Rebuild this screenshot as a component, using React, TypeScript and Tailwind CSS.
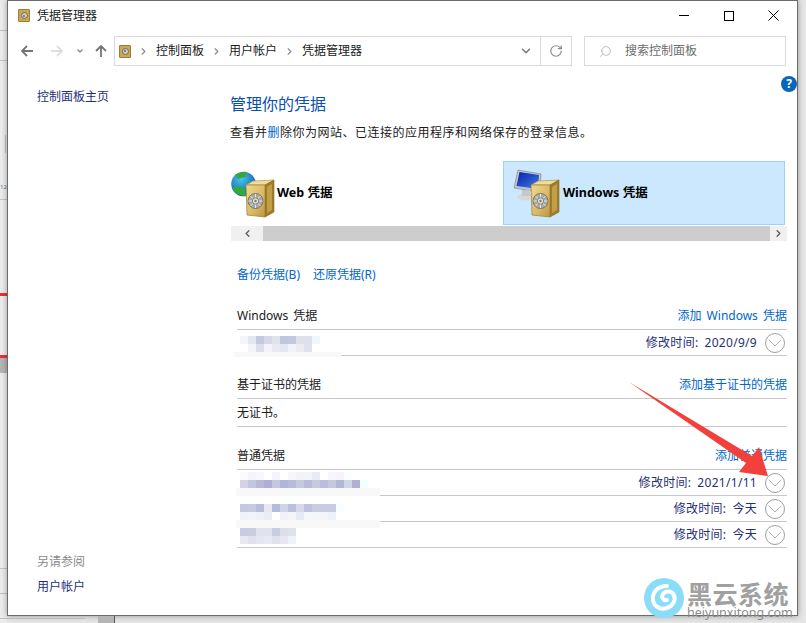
import { ChevronDown, ChevronLeft, ChevronRight, RotateCw, Search } from 'lucide-react';

// 打码区块的颜色，每行一组
const ROW_1 = [
  ['#f4f5fa', '#e4e6f1', '#c5c8e0', '#d6d8e8', '#e0e2ee', '#c2c5de', '#c4c7df', '#dfe0ec', '#dfe0ec', '#f0f7fc'],
  ['#ffffff', '#f3f4f9', '#dcdeec', '#f2f4f9', '#e8e9f2', '#e4e6f0', '#f2f3f9', '#ebecf3', '#dfe1ee', '#ffffff'],
];
const ROW_2 = [
  ['#fbfbfe', '#f4f5fb', '#f8f8fc', '#ffffff', '#f4f4fa', '#ffffff', '#f7f7fb', '#f2f3f9', '#f3f4f9', '#e8ebf4', '#ffffff', '#f7f7fb', '#f7f3fa', '#fbfdff'],
  ['#d3d3e5', '#c3c6e0', '#b6b9d8', '#adafd6', '#c3c8e0', '#b0b6d8', '#b7bcd9', '#c6cae0', '#b8bbda', '#c7c9df', '#babddb', '#c5c9e0', '#b2b7d8', '#cdd7e6', '#aeb0d6', '#f2ffff'],
];
const ROW_3 = [
  ['#c5c9e0', '#c9cae0', '#b9bcda', '#e9e8f2', '#b1bddc', '#cfd4e6', '#bcc0dc', '#d7d9e9', '#bfc1de', '#cacde2', '#c9cce1', '#c8cbe1', '#fafdff'],
  ['#f1f2f8', '#f3f4f9', '#f0f1f7', '#ebecf4', '#ffffff', '#f1f2f7', '#f4f4f9', '#e8eaf3', '#f6f7fb', '#f5f6fa', '#f4f4f9', '#eff1f8', '#ffffff'],
];
const ROW_4 = [
  ['#c9cbe2', '#cacce2', '#e0e2ee', '#e0e3ee', '#cacde2', '#dcdeeb', '#dde3ee'],
  ['#e8e8f2', '#dfe1ee', '#e4e6f1', '#e8e9f2', '#dfe1ec', '#e6e7f1', '#eef2fa'],
];

function Blur({ rows, band }: { rows: string[][]; band?: { left: number; width: number; height: number } }) {
  return (
    <div className="relative flex flex-col">
      {rows.map((r, i) => (
        <div key={i} className="flex">
          {r.map((c, j) => (
            <span key={j} className="block h-[8px] w-[8px]" style={{ background: c }} />
          ))}
        </div>
      ))}
      {band && (
        <span className="absolute top-full bg-[#f8f8f8]" style={{ left: band.left, width: band.width, height: band.height }} />
      )}
    </div>
  );
}

function VaultBody({ x = 0 }: { x?: number }) {
  return (
    <g transform={`translate(${x} 0)`}>
      <defs>
        <linearGradient id="vaultFront" x1="0" y1="0" x2="1" y2="1">
          <stop offset="0" stopColor="#efd98f" />
          <stop offset="0.6" stopColor="#d8b862" />
          <stop offset="1" stopColor="#bb9642" />
        </linearGradient>
      </defs>
      <path d="M15 17 L22 13 L43 12 L35 17 Z" fill="#efdd9c" stroke="#a98a3a" strokeWidth="0.6" />
      <path d="M34 17 L43 12 L43 44 L34 49 Z" fill="#a07c2a" stroke="#85671f" strokeWidth="0.6" />
      <path d="M36 19 L41 16 L41 42 L36 45 Z" fill="#c39e48" />
      <path d="M15 17 L34 17 L34 49 L16 47 Z" fill="url(#vaultFront)" stroke="#9c7d30" strokeWidth="0.7" />
      <circle cx="24.5" cy="33" r="7.5" fill="#a9a9a3" stroke="#6f6f67" strokeWidth="0.9" />
      <path d="M24.5 26 V40 M17.5 33 H31.5 M19.5 28 L29.5 38 M29.5 28 L19.5 38" stroke="#e6e6df" strokeWidth="1" />
      <circle cx="24.5" cy="33" r="3.2" fill="#dfdfd6" stroke="#6f6f67" strokeWidth="0.8" />
      <circle cx="24.5" cy="33" r="1.2" fill="#7d7d75" />
    </g>
  );
}

function WebVault() {
  return (
    <svg width="46" height="50" viewBox="0 0 46 50" className="shrink-0">
      <defs>
        <radialGradient id="globe" cx="0.4" cy="0.3" r="0.8">
          <stop offset="0" stopColor="#46c4f2" />
          <stop offset="1" stopColor="#0c4f9c" />
        </radialGradient>
      </defs>
      <circle cx="12.5" cy="16" r="12.3" fill="url(#globe)" />
      <path d="M4 7 Q10 3 16 4 L14 9 L7 11 Z M1 20 Q8 16 14 21 L15 28 Q5 28 1 20 Z" fill="#35a83c" />
      <VaultBody />
    </svg>
  );
}

function WinVault() {
  return (
    <svg width="47" height="50" viewBox="0 0 47 50" className="shrink-0">
      <defs>
        <linearGradient id="screen" x1="0" y1="0" x2="1" y2="1">
          <stop offset="0" stopColor="#0a1fa8" />
          <stop offset="1" stopColor="#3f7fe8" />
        </linearGradient>
      </defs>
      <path d="M5 2 L28 6 L27 24 L1 20 Z" fill="#c2c6cc" stroke="#8d9299" strokeWidth="0.8" />
      <path d="M6.5 4 L26 7 L25 21 L3.5 18 Z" fill="url(#screen)" />
      <ellipse cx="13" cy="29" rx="9" ry="3.5" fill="#d6d8da" />
      <rect x="9" y="22" width="8" height="6" fill="#c6c8cb" />
      <VaultBody x={3} />
    </svg>
  );
}

function TitleVault() {
  return (
    <span className="flex h-[13px] w-[12px] shrink-0 items-center justify-center rounded-[1px] border border-[#9c7f34] bg-[#c9a855]">
      <span className="flex h-[7px] w-[7px] items-center justify-center rounded-full border border-[#6f6a5a] bg-[#cfcfc6]">
        <span className="h-[2px] w-[2px] rounded-full bg-[#6f6a5a]" />
      </span>
    </span>
  );
}

function NavArrow({ className }: { className: string }) {
  return (
    <svg width="12" height="12" viewBox="0 0 12 12" fill="none" stroke="currentColor" strokeWidth="1.8" className={className}>
      <path d="M6 1 L1 6 L6 11 M1 6 H12" />
    </svg>
  );
}

function Expand() {
  return (
    <span className="ml-[8px] flex h-[20px] w-[20px] items-center justify-center rounded-full border border-[#a0a0a0]">
      <ChevronDown size={24} strokeWidth={0.7} className="shrink-0 text-[#8c8c8c]" />
    </span>
  );
}

function SectionHead({ title, action }: { title: string; action: string }) {
  return (
    <div className="flex h-[25px] justify-between border-b border-[#c8c8c8] pt-px text-[12px] leading-[20px] [word-spacing:2px]">
      <span className="text-[#1a1a1a]">{title}</span>
      <a className="text-[#0066cc]">{action}</a>
    </div>
  );
}

function CredRow({ rows, time, pad, band }: { rows: string[][]; time: string; pad: string; band?: { left: number; width: number; height: number } }) {
  return (
    <div className="flex h-[26px] justify-between border-b border-[#c8c8c8]">
      <div className={`ml-[3px] ${pad}`}>
        <Blur rows={rows} band={band} />
      </div>
      <div className="flex items-center text-[12px] tracking-[0.3px] text-[#1f2f75]">
        <span>修改时间:</span>
        <span className="ml-[6px]">{time}</span>
        <Expand />
        <span className="w-[2px]" />
      </div>
    </div>
  );
}

export default function App() {
  return (
    <div className="relative flex h-[623px] w-[806px] overflow-hidden bg-[#e6e6e6] font-['Noto_Sans','Noto_Sans_CJK_SC',sans-serif]">
      {/* 窗口背后露出的左侧内容 */}
      <div className="flex h-full w-[7px] shrink-0 flex-col overflow-hidden bg-[#ececec]">
        <div className="mt-[30px] h-px bg-[#c4c4c4]" />
        <div className="mt-[29px] h-px bg-[#c4c4c4]" />
        <div className="ml-[5px] mt-[74px] h-[18px] w-px bg-[#bdbdbd]" />
        <div className="mt-[29px] h-[10px] whitespace-nowrap text-[6px] leading-[10px] text-[#5c7f9c]">12</div>
        <div className="mt-[7px] h-px bg-[#c4c4c4]" />
        <div className="mt-[93px] h-[3px] bg-[#ee2f35]" />
        <div className="mt-[59px] h-[3px] bg-[#ee2f35]" />
        <div className="h-[15px] bg-[#b5b5b5]" />
        <div className="mt-[195px] h-px bg-[#c4c4c4]" />
        <div className="mt-[24px] h-px bg-[#c4c4c4]" />
      </div>

      <div className="flex h-[616px] w-[791px] shrink-0 flex-col border border-[#6b6b6b] bg-white shadow-[0_0_6px_rgba(0,0,0,0.35)]">
        {/* 标题栏 */}
        <div className="flex h-[29px] shrink-0 items-center pl-[10px]">
          <TitleVault />
          <span className="ml-[7px] text-[12px] text-[#1a1a1a]">凭据管理器</span>
          <div className="ml-auto flex items-center text-black">
            <span className="flex w-[45px] justify-center"><span className="h-px w-[10px] bg-black" /></span>
            <span className="flex w-[45px] justify-center"><span className="h-[10px] w-[10px] border border-black" /></span>
            <span className="flex w-[45px] justify-center">
              <svg width="11" height="11" viewBox="0 0 11 11" stroke="currentColor" strokeWidth="1"><path d="M0.5 0.5 L10.5 10.5 M10.5 0.5 L0.5 10.5" /></svg>
            </span>
            <span className="w-px" />
          </div>
        </div>

        {/* 地址栏 */}
        <div className="mt-[6px] flex h-[30px] shrink-0 items-center">
          <div className="flex w-[105px] items-center pl-[13px]">
            <NavArrow className="text-[#757575]" />
            <NavArrow className="ml-[18px] rotate-180 text-[#dedede]" />
            <svg width="6" height="4" viewBox="0 0 6 4" fill="none" stroke="#8a8a8a" strokeWidth="1.3" className="ml-[14px]"><path d="M0.5 0.5 L3 3 L5.5 0.5" /></svg>
            <NavArrow className="ml-[12px] rotate-90 text-[#757575]" />
          </div>
          <div className="ml-px flex h-[30px] w-[458px] items-center border border-[#d9d9d9] pl-[4px] text-[12px] text-[#1a1a1a]">
            <TitleVault />
            <ChevronRight size={11} strokeWidth={2.5} className="ml-[7px] text-[#8a8a8a]" />
            <span className="ml-[7px]">控制面板</span>
            <ChevronRight size={11} strokeWidth={2.5} className="ml-[7px] text-[#8a8a8a]" />
            <span className="ml-[7px]">用户帐户</span>
            <ChevronRight size={11} strokeWidth={2.5} className="ml-[7px] text-[#8a8a8a]" />
            <span className="ml-[7px]">凭据管理器</span>
            <ChevronDown size={14} strokeWidth={2.2} className="ml-auto mr-[7px] text-[#6f6f6f]" />
            <span className="flex h-full w-[31px] items-center justify-center border-l border-[#d9d9d9]">
              <RotateCw size={14} strokeWidth={2} className="text-[#8a8a8a]" />
            </span>
          </div>
          <div className="ml-[12px] flex h-[30px] w-[202px] items-center border border-[#d9d9d9] pl-[14px] text-[12px] text-[#6d6d6d]">
            <Search size={13} strokeWidth={1} className="-scale-x-100 text-[#8a8a8a]" />
            <span className="ml-[13px]">搜索控制面板</span>
          </div>
        </div>

        {/* 主体 */}
        <div className="relative flex min-h-0 flex-1">
          <span className="absolute right-0 top-[10px] flex h-[16px] w-[16px] items-center justify-center rounded-full bg-[#0a66b8] text-[12px] font-bold text-white">?</span>

          <aside className="flex w-[223px] shrink-0 flex-col pb-[18px] pl-[29px] pt-[21px] text-[12px] leading-[20px]">
            <a className="text-[#1f2f75]">控制面板主页</a>
            <span className="mt-auto text-[#8a8a8a]">另请参阅</span>
            <a className="mt-[5px] text-[#1f2f75]">用户帐户</a>
          </aside>

          <main className="flex w-[556px] shrink-0 flex-col pt-[26px]">
            <h1 className="-ml-px h-[24px] text-[16px] leading-[24px] text-[#0a4fb0]">管理你的凭据</h1>
            <p className="-ml-px mt-[7px] h-[20px] text-[12px] leading-[20px] tracking-[0.5px] text-[#1a1a1a]">
              查看并<span className="text-[#0066cc]">删</span>除你为网站、已连接的应用程序和网络保存的登录信息。
            </p>

            <div className="mt-[18px] flex h-[64px] w-[554px]">
              <div className="flex w-[272px] items-center">
                <WebVault />
                <span className="text-[12.5px] font-bold text-black">Web 凭据</span>
              </div>
              <div className="flex flex-1 items-center border border-[#99d1ff] bg-[#cce8ff] pl-[9px]">
                <WinVault />
                <span className="ml-[3px] text-[12.5px] font-bold text-black">Windows 凭据</span>
              </div>
            </div>

            <div className="mt-px flex h-[15px] w-[556px] items-center bg-[#f0f0f0]">
              <span className="flex w-[32px] justify-center"><ChevronLeft size={11} strokeWidth={3} className="text-[#606060]" /></span>
              <span className="h-full flex-1 bg-[#cdcdcd]" />
              <span className="flex w-[17px] justify-center"><ChevronRight size={11} strokeWidth={3} className="text-[#606060]" /></span>
            </div>

            <div className="ml-[6px] mt-[24px] flex w-[550px] flex-col">
              <div className="flex h-[20px] text-[12px] leading-[20px] text-[#0066cc]">
                <a>备份凭据(B)</a>
                <a className="ml-[13px]">还原凭据(R)</a>
              </div>

              <div className="mt-[20px]">
                <SectionHead title="Windows 凭据" action="添加 Windows 凭据" />
                <CredRow rows={ROW_1} time="2020/9/9" pad="pt-[6px]" band={{ left: -6, width: 107, height: 5 }} />
              </div>

              <div className="mt-[18px]">
                <SectionHead title="基于证书的凭据" action="添加基于证书的凭据" />
                <div className="flex h-[28px] items-center border-b border-[#c8c8c8] text-[12px] text-[#1a1a1a]">无证书。</div>
              </div>

              <div className="mt-[18px]">
                <SectionHead title="普通凭据" action="添加普通凭据" />
                <CredRow rows={ROW_2} time="2021/1/11" pad="pt-[2px]" band={{ left: -4, width: 144, height: 8 }} />
                <CredRow rows={ROW_3} time="今天" pad="pt-[8px]" band={{ left: -4, width: 144, height: 8 }} />
                <CredRow rows={ROW_4} time="今天" pad="pt-[6px]" />
              </div>
            </div>
          </main>
        </div>
      </div>

      {/* 窗口下方露出的底层内容 */}
      <span className="absolute bottom-[4px] left-0 h-px w-[85px] bg-[#bdbdbd]" />
      <span className="absolute bottom-0 left-[98px] h-[7px] w-[17px] border-r border-[#555555] bg-[#b5b5b5]" />

      {/* 红色箭头标注 */}
      <svg className="pointer-events-none absolute left-0 top-0" width="806" height="623">
        <polygon points="629,382 752,456 759,447 768,476 739,472 746,463" fill="#f2403c" />
      </svg>

      {/* 水印 */}
      <div className="pointer-events-none absolute left-[643px] top-[578px] flex">
        <svg width="42" height="42" viewBox="0 0 42 42">
          <circle cx="21" cy="20" r="20" fill="#8bdcf8" />
          <path d="M24 8 C14 8 9 15 10 22 C11 29 18 32 24 30 C30 28 33 22 31 17 C29 13 23 12 20 16 C18 19 20 23 24 22" fill="none" stroke="#ffffff" strokeWidth="4" strokeLinecap="round" />
        </svg>
        <div className="ml-[2px] flex flex-col pt-[3px]">
          <span className="h-[26px] text-[25px] font-bold leading-[26px] tracking-[0.5px] text-[#a0a0a0]">黑云系统</span>
          <span className="text-[12.5px] leading-[12px] text-[#8c8c8c]">heiyunxitong.com</span>
        </div>
      </div>
    </div>
  );
}
